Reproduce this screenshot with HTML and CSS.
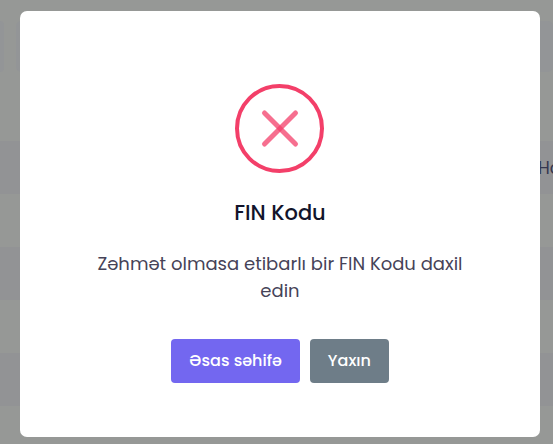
FILE: index.html
```
<!DOCTYPE html>
<html lang="az">
<head>
<meta charset="utf-8">
<meta name="viewport" content="width=device-width, initial-scale=1">
<title>FIN Kodu</title>
<link rel="stylesheet" href="styles.css">
</head>
<body>
<main class="page" aria-hidden="true">
  <div class="filters"><div class="filter filter-cut"></div><div class="filter"></div></div>
  <div class="rows">
    <div class="row row-head"><span class="cell">Ho</span></div>
    <div class="row"></div>
    <div class="row"></div>
    <div class="row"></div>
    <div class="row"></div>
    <div class="row"></div>
  </div>
</main>
<div class="overlay">
  <section class="modal" role="dialog" aria-modal="true" aria-labelledby="title" aria-describedby="message">
    <svg class="icon" viewBox="0 0 90 90" aria-hidden="true">
      <circle cx="44.5" cy="44.5" r="42.5" fill="none" stroke="#f33f69" stroke-width="4"/>
      <g stroke="#f33f69" stroke-opacity=".75" stroke-width="5" stroke-linecap="round">
        <path d="M29.5 29L60.5 60"/>
        <path d="M60.5 29L29.5 60"/>
      </g>
    </svg>
    <h1 class="title" id="title">FIN Kodu</h1>
    <p class="message" id="message">Zəhmət olmasa etibarlı bir FIN Kodu daxil edin</p>
    <div class="actions">
      <button class="button button-primary" type="button">Əsas səhifə</button>
      <button class="button button-secondary" type="button">Yaxın</button>
    </div>
  </section>
</div>
</body>
</html>
```
FILE: styles.css
```
* {
  box-sizing: border-box;
}

body {
  margin: 0;
  overflow: hidden;
  background: #969896;
  font-family: Poppins, Inter, sans-serif;
}

.page {
  padding-top: 21px;
}

.filters {
  display: flex;
  gap: 12px;
  margin-bottom: 69px;
}

.filter {
  flex: 1;
  height: 51px;
  border-radius: 5px;
  background: #939597;
}

.filter-cut {
  flex: 0 0 4px;
  border-radius: 0 5px 5px 0;
}

.row {
  height: 53px;
}

.row:nth-child(odd) {
  background: #929395;
}

.row-head {
  display: flex;
  align-items: center;
  justify-content: flex-end;
  color: #35374f;
  font-size: 17px;
  font-weight: 400;
}

.cell {
  width: 15px;
  white-space: nowrap;
}

.overlay {
  position: fixed;
  inset: 0;
  padding: 11px 13px 7px 20px;
}

.modal {
  display: flex;
  flex-direction: column;
  align-items: center;
  height: 100%;
  padding: 73px 72px 54px;
  border-radius: 7px;
  background: #fff;
  text-align: center;
}

.icon {
  flex: none;
  width: 90px;
  height: 90px;
}

.title {
  margin: 24px 0 22px;
  color: #12142b;
  font-size: 21px;
  font-weight: 500;
  line-height: 30px;
}

.message {
  margin: 0 0 35px;
  color: #464358;
  font-size: 18px;
  font-weight: 400;
  line-height: 27px;
}

.actions {
  display: flex;
  gap: 10px;
}

.button {
  height: 44px;
  padding: 0 18px;
  border: 0;
  border-radius: 4px;
  color: #fff;
  font: 500 16px/24px Poppins, Inter, sans-serif;
}

.button-primary {
  background: #7367f0;
}

.button-secondary {
  background: #6e7d88;
}
```
